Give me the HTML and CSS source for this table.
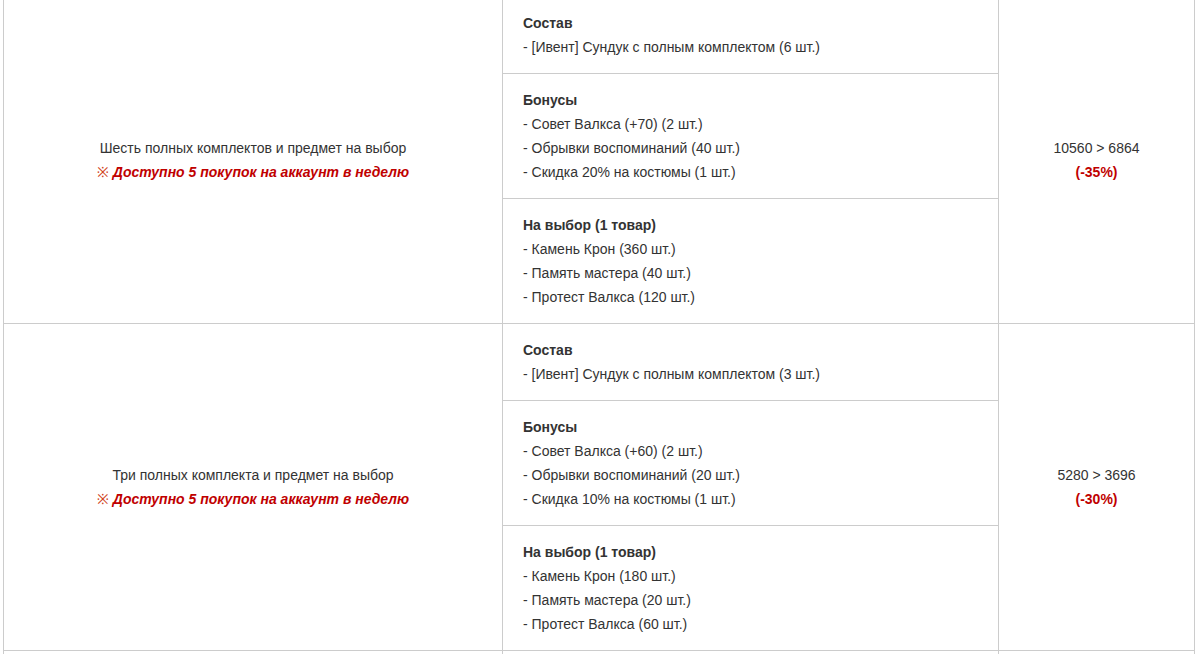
FILE: index.html
```html
<!DOCTYPE html>
<html lang="ru">
<head>
<meta charset="utf-8">
<title>Пакеты</title>
<link rel="stylesheet" href="styles.css">
</head>
<body>
<div class="page">
<table class="shop">
<colgroup><col class="c1"><col class="c2"><col class="c3"></colgroup>
<tbody>
<tr>
<td class="name" rowspan="3">Шесть полных комплектов и предмет на выбор<br><span class="limit"><span class="mark">※</span> Доступно 5 покупок на аккаунт в неделю</span></td>
<td class="part"><div class="ttl">Состав</div><div>- [Ивент] Сундук с полным комплектом (6 шт.)</div></td>
<td class="price" rowspan="3">10560 &gt; 6864<br><span class="off">(-35%)</span></td>
</tr>
<tr><td class="part"><div class="ttl">Бонусы</div><div>- Совет Валкса (+70) (2 шт.)</div><div>- Обрывки воспоминаний (40 шт.)</div><div>- Скидка 20% на костюмы (1 шт.)</div></td></tr>
<tr><td class="part"><div class="ttl">На выбор (1 товар)</div><div>- Камень Крон (360 шт.)</div><div>- Память мастера (40 шт.)</div><div>- Протест Валкса (120 шт.)</div></td></tr>
<tr>
<td class="name" rowspan="3">Три полных комплекта и предмет на выбор<br><span class="limit"><span class="mark">※</span> Доступно 5 покупок на аккаунт в неделю</span></td>
<td class="part"><div class="ttl">Состав</div><div>- [Ивент] Сундук с полным комплектом (3 шт.)</div></td>
<td class="price" rowspan="3">5280 &gt; 3696<br><span class="off">(-30%)</span></td>
</tr>
<tr><td class="part"><div class="ttl">Бонусы</div><div>- Совет Валкса (+60) (2 шт.)</div><div>- Обрывки воспоминаний (20 шт.)</div><div>- Скидка 10% на костюмы (1 шт.)</div></td></tr>
<tr><td class="part"><div class="ttl">На выбор (1 товар)</div><div>- Камень Крон (180 шт.)</div><div>- Память мастера (20 шт.)</div><div>- Протест Валкса (60 шт.)</div></td></tr>
<tr class="next"><td></td><td></td><td></td></tr>
</tbody>
</table>
</div>
</body>
</html>
```
FILE: styles.css
```css
html, body {
  margin: 0;
  padding: 0;
  background: #fff;
}
body {
  font-family: "Liberation Sans", Arial, sans-serif;
  font-size: 14px;
  line-height: 24px;
  color: #333;
  overflow: hidden;
}
.page {
  padding: 0 3px;
}
.shop {
  border-collapse: collapse;
  table-layout: fixed;
  width: 1192px;
  margin-top: -4px;
}
.c1 { width: 499px; }
.c2 { width: 496px; }
.c3 { width: 196px; }
.shop td {
  border: 1px solid #ccc;
  padding: 0;
  vertical-align: middle;
}
.shop .name,
.shop .price {
  text-align: center;
}
.shop .part {
  padding: 14px 20px;
  text-align: left;
}
.ttl {
  font-weight: bold;
}
.limit {
  color: #c00000;
  font-weight: bold;
  font-style: italic;
}
.mark {
  font-weight: normal;
  font-style: normal;
  color: #d04020;
}
.off {
  color: #c00000;
  font-weight: bold;
}
.next td {
  height: 60px;
}
```
